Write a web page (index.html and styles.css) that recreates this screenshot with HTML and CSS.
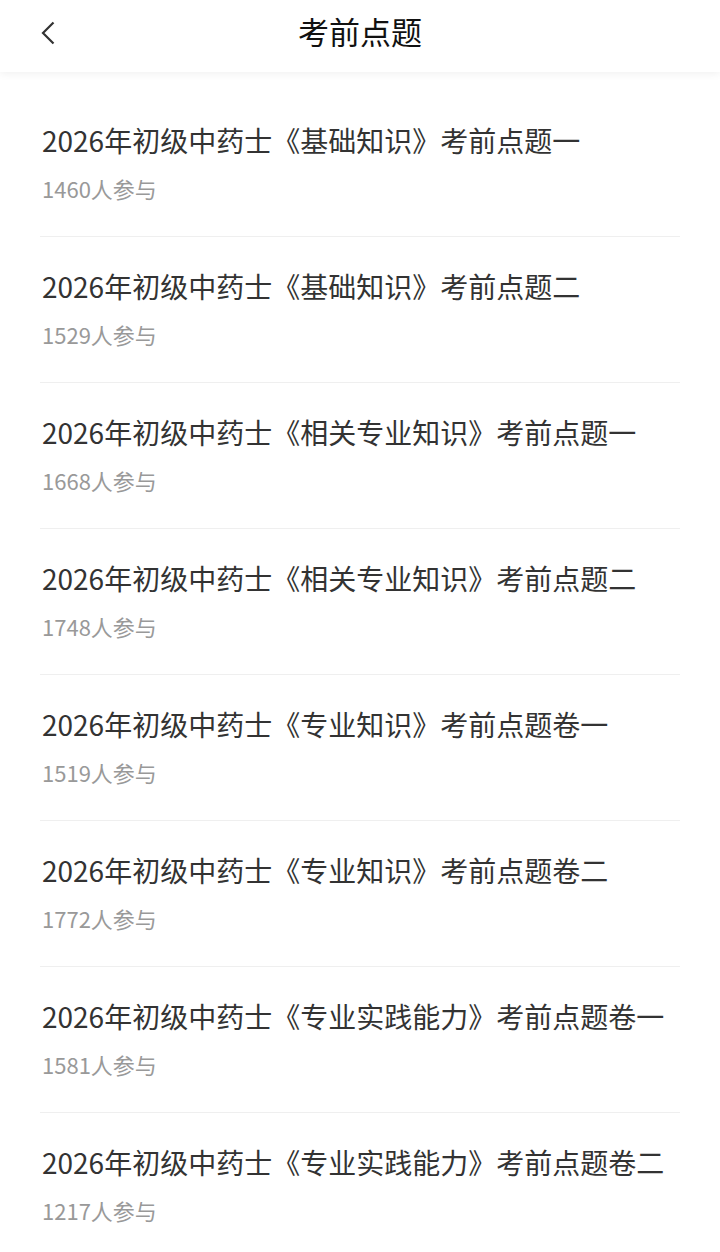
FILE: index.html
```html
<!DOCTYPE html>
<html lang="zh-CN">
<head>
<meta charset="utf-8">
<title>考前点题</title>
<link rel="stylesheet" href="styles.css">
</head>
<body>
<header class="topbar">
  <button class="back" aria-label="返回">
    <svg width="16" height="24" viewBox="0 0 16 24"><path d="M13.5 1.5 L3 12 L13.5 22.5" fill="none" stroke="#333" stroke-width="2.2" stroke-linecap="butt" stroke-linejoin="miter"/></svg>
  </button>
  <h1 class="title">考前点题</h1>
</header>
<ul class="list">
  <li class="item"><div class="name">2026年初级中药士《基础知识》考前点题一</div><div class="count">1460人参与</div></li>
  <li class="item"><div class="name">2026年初级中药士《基础知识》考前点题二</div><div class="count">1529人参与</div></li>
  <li class="item"><div class="name">2026年初级中药士《相关专业知识》考前点题一</div><div class="count">1668人参与</div></li>
  <li class="item"><div class="name">2026年初级中药士《相关专业知识》考前点题二</div><div class="count">1748人参与</div></li>
  <li class="item"><div class="name">2026年初级中药士《专业知识》考前点题卷一</div><div class="count">1519人参与</div></li>
  <li class="item"><div class="name">2026年初级中药士《专业知识》考前点题卷二</div><div class="count">1772人参与</div></li>
  <li class="item"><div class="name">2026年初级中药士《专业实践能力》考前点题卷一</div><div class="count">1581人参与</div></li>
  <li class="item"><div class="name">2026年初级中药士《专业实践能力》考前点题卷二</div><div class="count">1217人参与</div></li>
</ul>
</body>
</html>
```
FILE: styles.css
```css
* { box-sizing: border-box; }
html, body { margin: 0; padding: 0; background: #fff; }
body { font-family: "Noto Sans CJK SC", "Noto Sans", sans-serif; color: #333; }
.topbar {
  position: relative;
  height: 72px;
  display: flex;
  justify-content: center;
  align-items: flex-start;
  padding-top: 15px;
  background: #fff;
  box-shadow: 0 2px 8px rgba(0,0,0,0.06);
}
.back {
  position: absolute;
  left: 40px;
  top: 21px;
  padding: 0;
  border: 0;
  background: none;
  width: 16px;
  height: 24px;
}
.back svg { display: block; }
.title {
  margin: 0;
  font-size: 31px;
  font-weight: 400;
  color: #111;
  line-height: 1;
}
.list { list-style: none; margin: 0; padding: 19px 40px 0; }
.item {
  height: 146px;
  border-bottom: 1px solid #efefef;
  padding-left: 2px;
}
.item:last-child { border-bottom: 0; }
.name {
  font-size: 28px;
  line-height: 1;
  color: #333;
  padding-top: 35px;
  white-space: nowrap;
}
.count {
  font-size: 22px;
  line-height: 1;
  color: #999;
  margin-top: 23px;
}
```
